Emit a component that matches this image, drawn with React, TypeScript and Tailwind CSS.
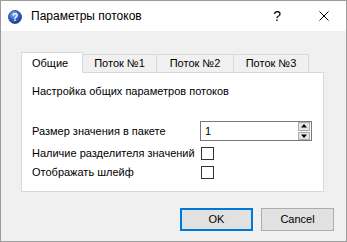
const tabs = ['Общие', 'Поток №1', 'Поток №2', 'Поток №3'];
const tabWidths = ['w-[62px]', 'w-[74px]', 'w-[77px]', 'w-[75px]'];

const HelpIcon = () => (
  <svg width="14" height="14" viewBox="0 0 14 14">
    <defs>
      <radialGradient id="hg" cx="40%" cy="30%" r="70%">
        <stop offset="0%" stopColor="#8fb4f0" />
        <stop offset="60%" stopColor="#2f5fc4" />
        <stop offset="100%" stopColor="#1b3f94" />
      </radialGradient>
    </defs>
    <circle cx="7" cy="7" r="6.5" fill="url(#hg)" stroke="#1d3c86" strokeWidth="0.8" />
    <text x="7" y="11" textAnchor="middle" fontSize="10" fontWeight="bold" fill="#fff" fontFamily="Liberation Sans, sans-serif">?</text>
  </svg>
);

const App = () => {
  return (
    <div className="w-[347px] h-[242px] border border-[#9c9c9c] bg-[#f0f0f0] flex flex-col text-[11px] text-black font-['Liberation_Sans',sans-serif] overflow-hidden whitespace-nowrap">
      {/* title bar */}
      <div className="h-[30px] bg-white flex items-center">
        <div className="ml-[7px] mt-[1px]"><HelpIcon /></div>
        <span className="ml-[9px] text-[12px]">Параметры потоков</span>
        <span className="ml-auto mr-[38px] text-[14px]">?</span>
        <svg className="mr-[17px]" width="10" height="10" viewBox="0 0 10 10">
          <path d="M0.5 0.5L9.5 9.5M9.5 0.5L0.5 9.5" stroke="#000" strokeWidth="1" />
        </svg>
      </div>

      {/* body */}
      <div className="flex-1 flex flex-col pt-[20px]">
        <div className="ml-[20px] w-[303px]">
          {/* tab bar */}
          <div className="flex items-end h-[21px]">
            {tabs.map((t, i) => (
              <div
                key={t}
                className={`${tabWidths[i]} flex items-center ${i === 0
                  ? 'h-[21px] bg-white border-l border-t border-r border-[#d9d9d9] -mb-[1px] z-10 pl-[10px]'
                  : 'h-[18px] bg-[#f0f0f0] border-t border-r border-[#d9d9d9] justify-center'}`}
              >
                {t}
              </div>
            ))}
          </div>
          {/* pane */}
          <div className="h-[120px] bg-white border border-[#d9d9d9] pl-[10px] pt-[8px] flex flex-col">
            <div className="h-[20px] flex items-center">Настройка общих параметров потоков</div>
            <div className="mt-[20px] h-[20px] flex items-center">
              <span className="w-[168px]">Размер значения в пакете</span>
              <div className="w-[112px] h-[20px] border border-[#7a7a7a] flex items-center">
                <span className="ml-[4px] flex-1">1</span>
                <div className="w-[12px] h-[18px] mr-[1px] flex flex-col gap-[1px]">
                  <div className="flex-1 bg-[#e5e5e5] border border-[#acacac] flex items-center justify-center">
                    <svg width="6" height="4" viewBox="0 0 6 4"><path d="M3 0L6 3.5H0Z" fill="#000" /></svg>
                  </div>
                  <div className="flex-1 bg-[#e5e5e5] border border-[#acacac] flex items-center justify-center">
                    <svg width="6" height="4" viewBox="0 0 6 4"><path d="M0 0.5H6L3 4Z" fill="#000" /></svg>
                  </div>
                </div>
              </div>
            </div>
            <div className="mt-[6px] h-[13px] flex items-center">
              <span className="w-[169px]">Наличие разделителя значений</span>
              <div className="w-[13px] h-[13px] border border-[#333333] bg-white" />
            </div>
            <div className="mt-[6px] h-[13px] flex items-center">
              <span className="w-[169px]">Отображать шлейф</span>
              <div className="w-[13px] h-[13px] border border-[#333333] bg-white" />
            </div>
          </div>
        </div>

        {/* buttons */}
        <div className="mt-[16px] flex justify-end gap-[8px] pr-[12px]">
          <button className="w-[73px] h-[23px] bg-[#e1e1e1] border-2 border-[#0078d7]">OK</button>
          <button className="w-[73px] h-[23px] bg-[#e1e1e1] border border-[#adadad]">Cancel</button>
        </div>
      </div>
    </div>
  );
};

export default App;
